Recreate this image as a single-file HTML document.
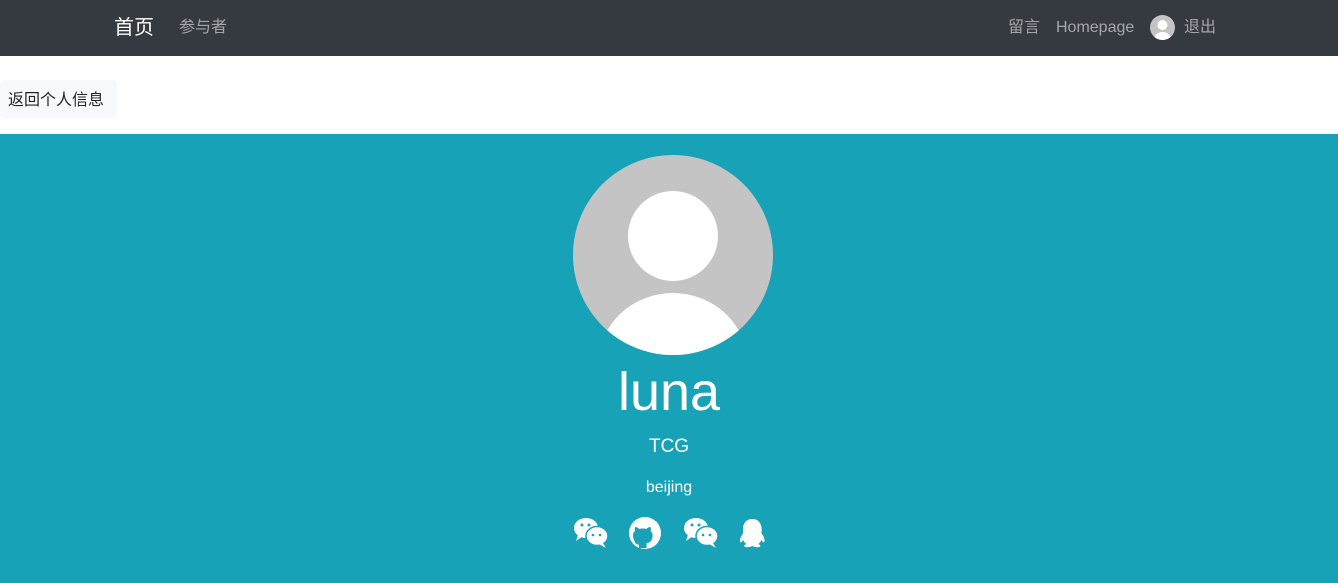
<!DOCTYPE html>
<html><head><meta charset="utf-8"><style>
*{margin:0;padding:0;box-sizing:border-box}
body{width:1338px;height:583px;overflow:hidden;font-family:"Liberation Sans","Noto Sans CJK SC",sans-serif;background:#fff}
.nav{height:56px;background:#343a40;position:relative}
.nav span{position:absolute;color:rgba(255,255,255,.55);font-size:16px;top:2px;height:52px;line-height:52px}
.btn{position:absolute;left:0;top:80px;width:117px;height:38px;background:#f8f9fa;border-radius:4px;font-size:16px;color:#212529;padding:2px 0 0 8px;line-height:38px}
.hero{position:absolute;top:134px;left:0;width:1338px;height:449px;background:#17a2b8;color:#fff;text-align:center}
</style></head><body>
<div class="nav">
<span style="left:114px;font-size:20px;color:#fff">首页</span>
<span style="left:179px">参与者</span>
<span style="left:1008px">留言</span>
<span style="left:1056px">Homepage</span>
<svg style="position:absolute;left:1150px;top:15px" width="25" height="25" viewBox="0 0 25 25"><circle cx="12.5" cy="12.5" r="12.5" fill="#c4c4c4"/><clipPath id="c"><circle cx="12.5" cy="12.5" r="12.5"/></clipPath><g clip-path="url(#c)" fill="#fff"><circle cx="12.5" cy="10" r="5"/><ellipse cx="12.5" cy="24" rx="8" ry="7"/></g></svg>
<span style="left:1184px">退出</span>
</div>
<div class="btn">返回个人信息</div>
<div class="hero">
<svg style="position:absolute;left:573px;top:21px" width="200" height="200" viewBox="0 0 200 200"><circle cx="100" cy="100" r="100" fill="#c4c4c4"/><clipPath id="d"><circle cx="100" cy="100" r="100"/></clipPath><g clip-path="url(#d)" fill="#fff"><ellipse cx="100" cy="210" rx="75" ry="72"/></g><circle cx="100" cy="81" r="47" fill="#c4c4c4"/><circle cx="100" cy="81" r="45" fill="#fff"/></svg>
<div style="position:absolute;left:0;width:1338px;top:226px;font-size:54px;line-height:64px">luna</div>
<div style="position:absolute;left:0;width:1338px;top:302px;font-size:19px">TCG</div>
<div style="position:absolute;left:0;width:1338px;top:345px;font-size:16px">beijing</div>
<svg style="position:absolute;left:573px;top:383px" width="200" height="32" viewBox="0 0 200 32" fill="#fff">
<g id="w"><ellipse cx="13" cy="11" rx="12" ry="10"/><path d="M5 18 L3 24 L10 19Z"/><ellipse cx="24" cy="19" rx="11" ry="9.5" stroke="#17a2b8" stroke-width="1.5"/><path d="M30 26 L33 31 L26 27Z"/><circle cx="9" cy="8" r="1.5" fill="#17a2b8"/><circle cx="16" cy="8" r="1.5" fill="#17a2b8"/><circle cx="20" cy="18" r="1.3" fill="#17a2b8"/><circle cx="27" cy="18" r="1.3" fill="#17a2b8"/></g>
<use href="#w" x="110"/>
<circle cx="72" cy="16" r="16"/><path d="M66 31 v-5 c-3 0-6-2-6-8 c0-2 1-3 2-4 c-.5-1.5-.3-3 .3-4 c1.5 0 3 1 4 2 c2-.6 5-.6 7 0 c1-1 2.5-2 4-2 c.6 1 .8 2.5 .3 4 c1 1 2 2 2 4 c0 6-3 8-6 8 v5Z" fill="#17a2b8"/><path d="M66 27 c-2 0-3-1-4-3" stroke="#17a2b8" stroke-width="1.5" fill="none"/>
<path d="M179 2 c-6 0-9 5-9 10 c0 2 0 3 .3 4 c-2 3-4 6-3 9 c1 1 2-1 3-2 c.5 2 2 3 3 4 c-2 1-3 2-1 3 c2 .5 5 0 7-1 c2 1 5 1.5 7 1 c2-1 1-2-1-3 c1-1 2.5-2 3-4 c1 1 2 3 3 2 c1-3-1-6-3-9 c.3-1 .3-2 .3-4 c0-5-3-10-9-10Z"/>
</svg>
</div>
</body></html>
